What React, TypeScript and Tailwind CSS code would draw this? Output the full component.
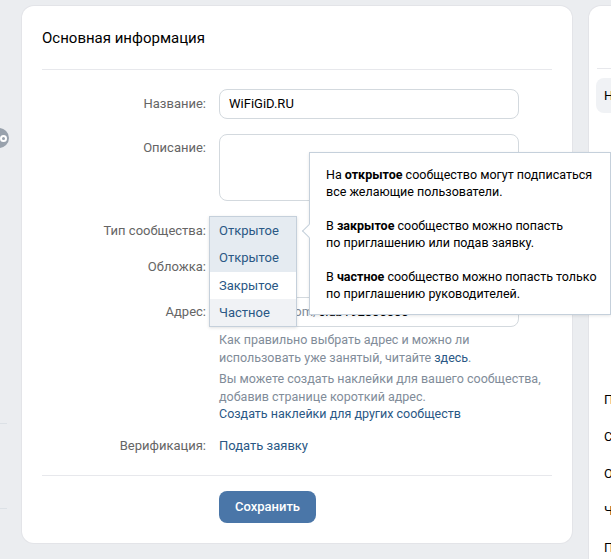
import React from "react";

const font = { fontFamily: "Roboto, 'Liberation Sans', sans-serif" };

function Label({ children, pt }: { children: React.ReactNode; pt: string }) {
  return (
    <div className={`w-[164px] shrink-0 text-right text-[13px] leading-[17px] text-[#656565] ${pt}`}>{children}</div>
  );
}

export default function App() {
  return (
    <div
      className="w-[611px] h-[559px] bg-[#ebedf0] overflow-hidden flex items-start pt-[6px] text-[13px] text-black"
      style={font}
    >
      {/* left sliver */}
      <div className="relative w-[8px] h-[553px] shrink-0">
        <div className="absolute left-[-11px] top-[122px] w-[20px] h-[20px] rounded-full bg-[#99a2ad] flex items-center justify-center">
          <div className="ml-[8px] w-[7px] h-[7px] rounded-full border-[2px] border-white" />
        </div>
        <div className="absolute left-0 top-[417px] w-[7px] h-px bg-[#dce1e6]" />
        <div className="absolute left-0 top-[502px] w-[7px] h-px bg-[#dce1e6]" />
      </div>

      {/* main card */}
      <div className="relative z-10 ml-[14px] w-[550px] shrink-0 bg-white rounded-[12px] shadow-[0_0_0_1px_#e3e4e8]">
        <div className="mx-[20px] pt-[22px] pb-[21px] border-b border-[#e7e8ec] text-[15px] leading-[20px] text-black">
          Основная информация
        </div>

        <div className="relative px-[20px]">
          {/* Название */}
          <div className="flex items-start mt-[19px]">
            <Label pt="pt-[6px]">Название:</Label>
            <div className="ml-[13px] w-[300px] h-[30px] border border-[#d3d9de] rounded-[8px] px-[9px] flex items-center text-[13px] text-black">
              WiFiGiD.RU
            </div>
          </div>

          {/* Описание */}
          <div className="flex items-start mt-[15px]">
            <Label pt="pt-[5px]">Описание:</Label>
            <div className="ml-[13px] w-[300px] h-[67px] border border-[#d3d9de] rounded-[8px]" />
          </div>

          {/* Тип сообщества */}
          <div className="flex items-start mt-[15px]">
            <Label pt="pt-[6px]">Тип сообщества:</Label>
            <div className="ml-[13px] w-[300px] h-[30px] px-[10px] flex items-center text-[#2a5885]">Открытое</div>
          </div>

          {/* Обложка */}
          <div className="flex items-start mt-[12px]">
            <Label pt="pt-0">Обложка:</Label>
            <div className="ml-[13px] text-[#2a5885] leading-[17px]">Загрузить</div>
          </div>

          {/* Адрес */}
          <div className="flex items-start mt-[22px]">
            <Label pt="pt-[6px]">Адрес:</Label>
            <div className="ml-[13px] w-[300px] h-[30px] border border-[#d3d9de] rounded-[8px] px-[9px] flex items-center text-[13px]">
              <span className="text-[#818c99]">https://vk.com/</span>
              <span className="text-black">club192800000</span>
            </div>
          </div>

          {/* help */}
          <div className="ml-[177px] mt-[4px] w-[340px] text-[12.5px] leading-[17.5px] text-[#818c99]">
            <div>
              Как правильно выбрать адрес и можно ли
              <br />
              использовать уже занятый, читайте <span className="text-[#2a5885]">здесь</span>.
            </div>
            <div className="mt-[4px]">
              Вы можете создать наклейки для вашего сообщества,
              <br />
              добавив странице короткий адрес.
              <br />
              <span className="text-[#2a5885]">Создать наклейки для других сообществ</span>
            </div>
          </div>

          {/* Верификация */}
          <div className="flex items-start mt-[14px]">
            <Label pt="pt-0">Верификация:</Label>
            <div className="ml-[13px] text-[#2a5885] leading-[17px]">Подать заявку</div>
          </div>

          {/* dropdown overlay */}
          <div className="absolute left-[187px] top-[127px] w-[88px] bg-white border border-[#c5d0db] shadow-[0_1px_3px_rgba(0,0,0,0.12)] text-[13px] text-[#2a5885]">
            <div className="h-[27px] pl-[9px] flex items-center bg-[#e5ebf1]">Открытое</div>
            <div className="h-[28px] pl-[9px] flex items-center bg-[#e5ebf1]">Открытое</div>
            <div className="h-[27px] pl-[9px] flex items-center bg-white">Закрытое</div>
            <div className="h-[27px] pl-[9px] flex items-center bg-[#f0f2f5]">Частное</div>
          </div>

          {/* tooltip overlay */}
          <div className="absolute left-[287px] top-[63px] w-[302px] h-[163px] bg-white border border-[#c5d0db] shadow-[0_1px_3px_rgba(0,0,0,0.1)] pl-[16px] pt-[13px] text-[12.5px] leading-[17px] text-black">
            <div className="absolute left-[-6px] top-[73px] w-[10px] h-[10px] bg-white border-l border-b border-[#c5d0db] rotate-45" />
            <div className="relative">
              На <b className="font-bold">открытое</b> сообщество могут подписаться
              <br />
              все желающие пользователи.
              <br />
              <br />В <b className="font-bold">закрытое</b> сообщество можно попасть
              <br />
              по приглашению или подав заявку.
              <br />
              <br />В <b className="font-bold">частное</b> сообщество можно попасть только
              <br />
              по приглашению руководителей.
            </div>
          </div>
        </div>

        <div className="mx-[20px] mt-[21px] border-t border-[#e7e8ec]" />
        <div className="pl-[197px] pt-[15px] pb-[20px]">
          <button className="w-[97px] h-[32px] rounded-[8px] bg-[#4a76a8] text-white text-[13px] font-medium">
            Сохранить
          </button>
        </div>
      </div>

      {/* right card */}
      <div className="relative ml-[17px] flex-1 h-[553px] bg-white rounded-tl-[12px] shadow-[0_0_0_1px_#e3e4e8] overflow-hidden">
        <div className="ml-[8px] mt-[62px] border-t border-[#e7e8ec]" />
        <div className="ml-[7px] mt-[9px] h-[35px] rounded-l-[8px] bg-[#f0f2f5] pl-[8px] flex items-center text-[13px] text-black">
          Настройки
        </div>
        <div className="pl-[15px] mt-[278px] flex flex-col gap-[20px] text-[13px] leading-[17px] text-black">
          <div>Публикации</div>
          <div>Сообщения</div>
          <div>Обсуждения</div>
          <div>Чат</div>
          <div>Приложения</div>
        </div>
      </div>
    </div>
  );
}
